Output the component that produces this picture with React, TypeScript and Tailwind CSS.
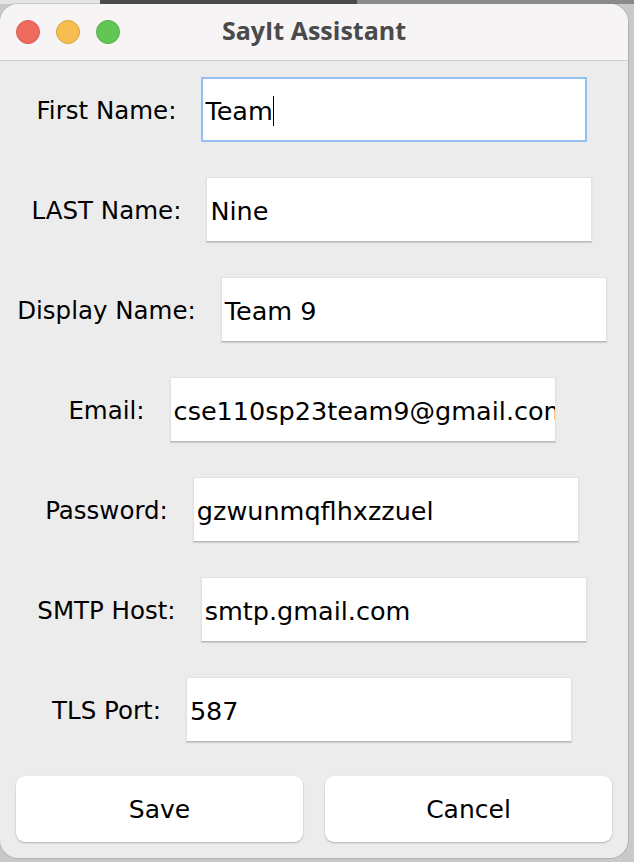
import React, { useState } from 'react';

type Field = {
  label: string;
  value: string;
  focused?: boolean;
};

const fields: Field[] = [
  { label: 'First Name:', value: 'Team', focused: true },
  { label: 'LAST Name:', value: 'Nine' },
  { label: 'Display Name:', value: 'Team 9' },
  { label: 'Email:', value: 'cse110sp23team9@gmail.com' },
  { label: 'Password:', value: 'gzwunmqflhxzzuel' },
  { label: 'SMTP Host:', value: 'smtp.gmail.com' },
  { label: 'TLS Port:', value: '587' },
];

const FormRow: React.FC<{ field: Field }> = ({ field }) => (
  <div className="flex items-center justify-center gap-[25px] h-[65px]">
    <span className="text-[24.5px] text-black whitespace-nowrap pt-[4px]">{field.label}</span>
    <div
      className={
        field.focused
          ? 'w-[386px] h-[65px] bg-white border-2 border-[#93bff2] flex items-center pl-[2px] pt-[3px] overflow-hidden'
          : 'w-[386px] h-[65px] bg-white border border-[#e2e2e2] border-b-[#b9b9b9] shadow-[0_1px_1px_rgba(0,0,0,0.12)] flex items-center pl-[3px] pt-[3px] overflow-hidden'
      }
    >
      <span className="text-[25.5px] text-black whitespace-nowrap">{field.value}</span>
      {field.focused && <span className="w-px h-[30px] bg-black" />}
    </div>
  </div>
);

const App: React.FC = () => {
  const [saved, setSaved] = useState(false);

  return (
    <div
      className="w-[634px] h-[862px] bg-[#c9c9c9] overflow-hidden relative"
      style={{ fontFamily: '"DejaVu Sans", "Liberation Sans", sans-serif' }}
    >
      <div className="h-[4px] bg-[#e4e4e4] flex">
        <div className="ml-[100px] w-[260px] bg-[#4b4b4b]" />
        <div className="w-[280px] bg-[#8a8a8a]" />
      </div>
      <div className="w-[628px] h-[854px] bg-[#ececec] rounded-[18px] overflow-hidden flex flex-col shadow-[0_0_0_1px_rgba(0,0,0,0.12)]">
        <div className="h-[57px] bg-[#f6f4f5] border-b border-[#cfcfcf] flex items-center relative shrink-0">
          <div className="flex items-center gap-[16px] pl-[16px]">
            <span className="w-[24px] h-[24px] rounded-full bg-[#ee6a5f] border border-[#d65a50]" />
            <span className="w-[24px] h-[24px] rounded-full bg-[#f6be50] border border-[#d9a23f]" />
            <span className="w-[24px] h-[24px] rounded-full bg-[#62c655] border border-[#52ad47]" />
          </div>
          <span
            className="absolute left-0 right-0 text-center text-[25px] font-bold text-[#4a4a4a] pb-[3px]"
            style={{ fontFamily: '"Open Sans", "Liberation Sans", sans-serif' }}
          >
            SayIt Assistant
          </span>
        </div>

        <div className="flex flex-col gap-[35px] pt-[16px] pr-[4px]">
          {fields.map((f) => (
            <FormRow key={f.label} field={f} />
          ))}
        </div>

        <div className="flex gap-[22px] px-[16px] pt-[34px]">
          <button
            onClick={() => setSaved(true)}
            className="w-[288px] h-[66px] bg-white rounded-[9px] shadow-[0_1px_2px_rgba(0,0,0,0.25)] text-[25px] text-black pt-[2px]"
          >
            {saved ? 'Save' : 'Save'}
          </button>
          <button className="w-[288px] h-[66px] bg-white rounded-[9px] shadow-[0_1px_2px_rgba(0,0,0,0.25)] text-[25px] text-black pt-[2px]">
            Cancel
          </button>
        </div>
      </div>
    </div>
  );
};

export default App;
